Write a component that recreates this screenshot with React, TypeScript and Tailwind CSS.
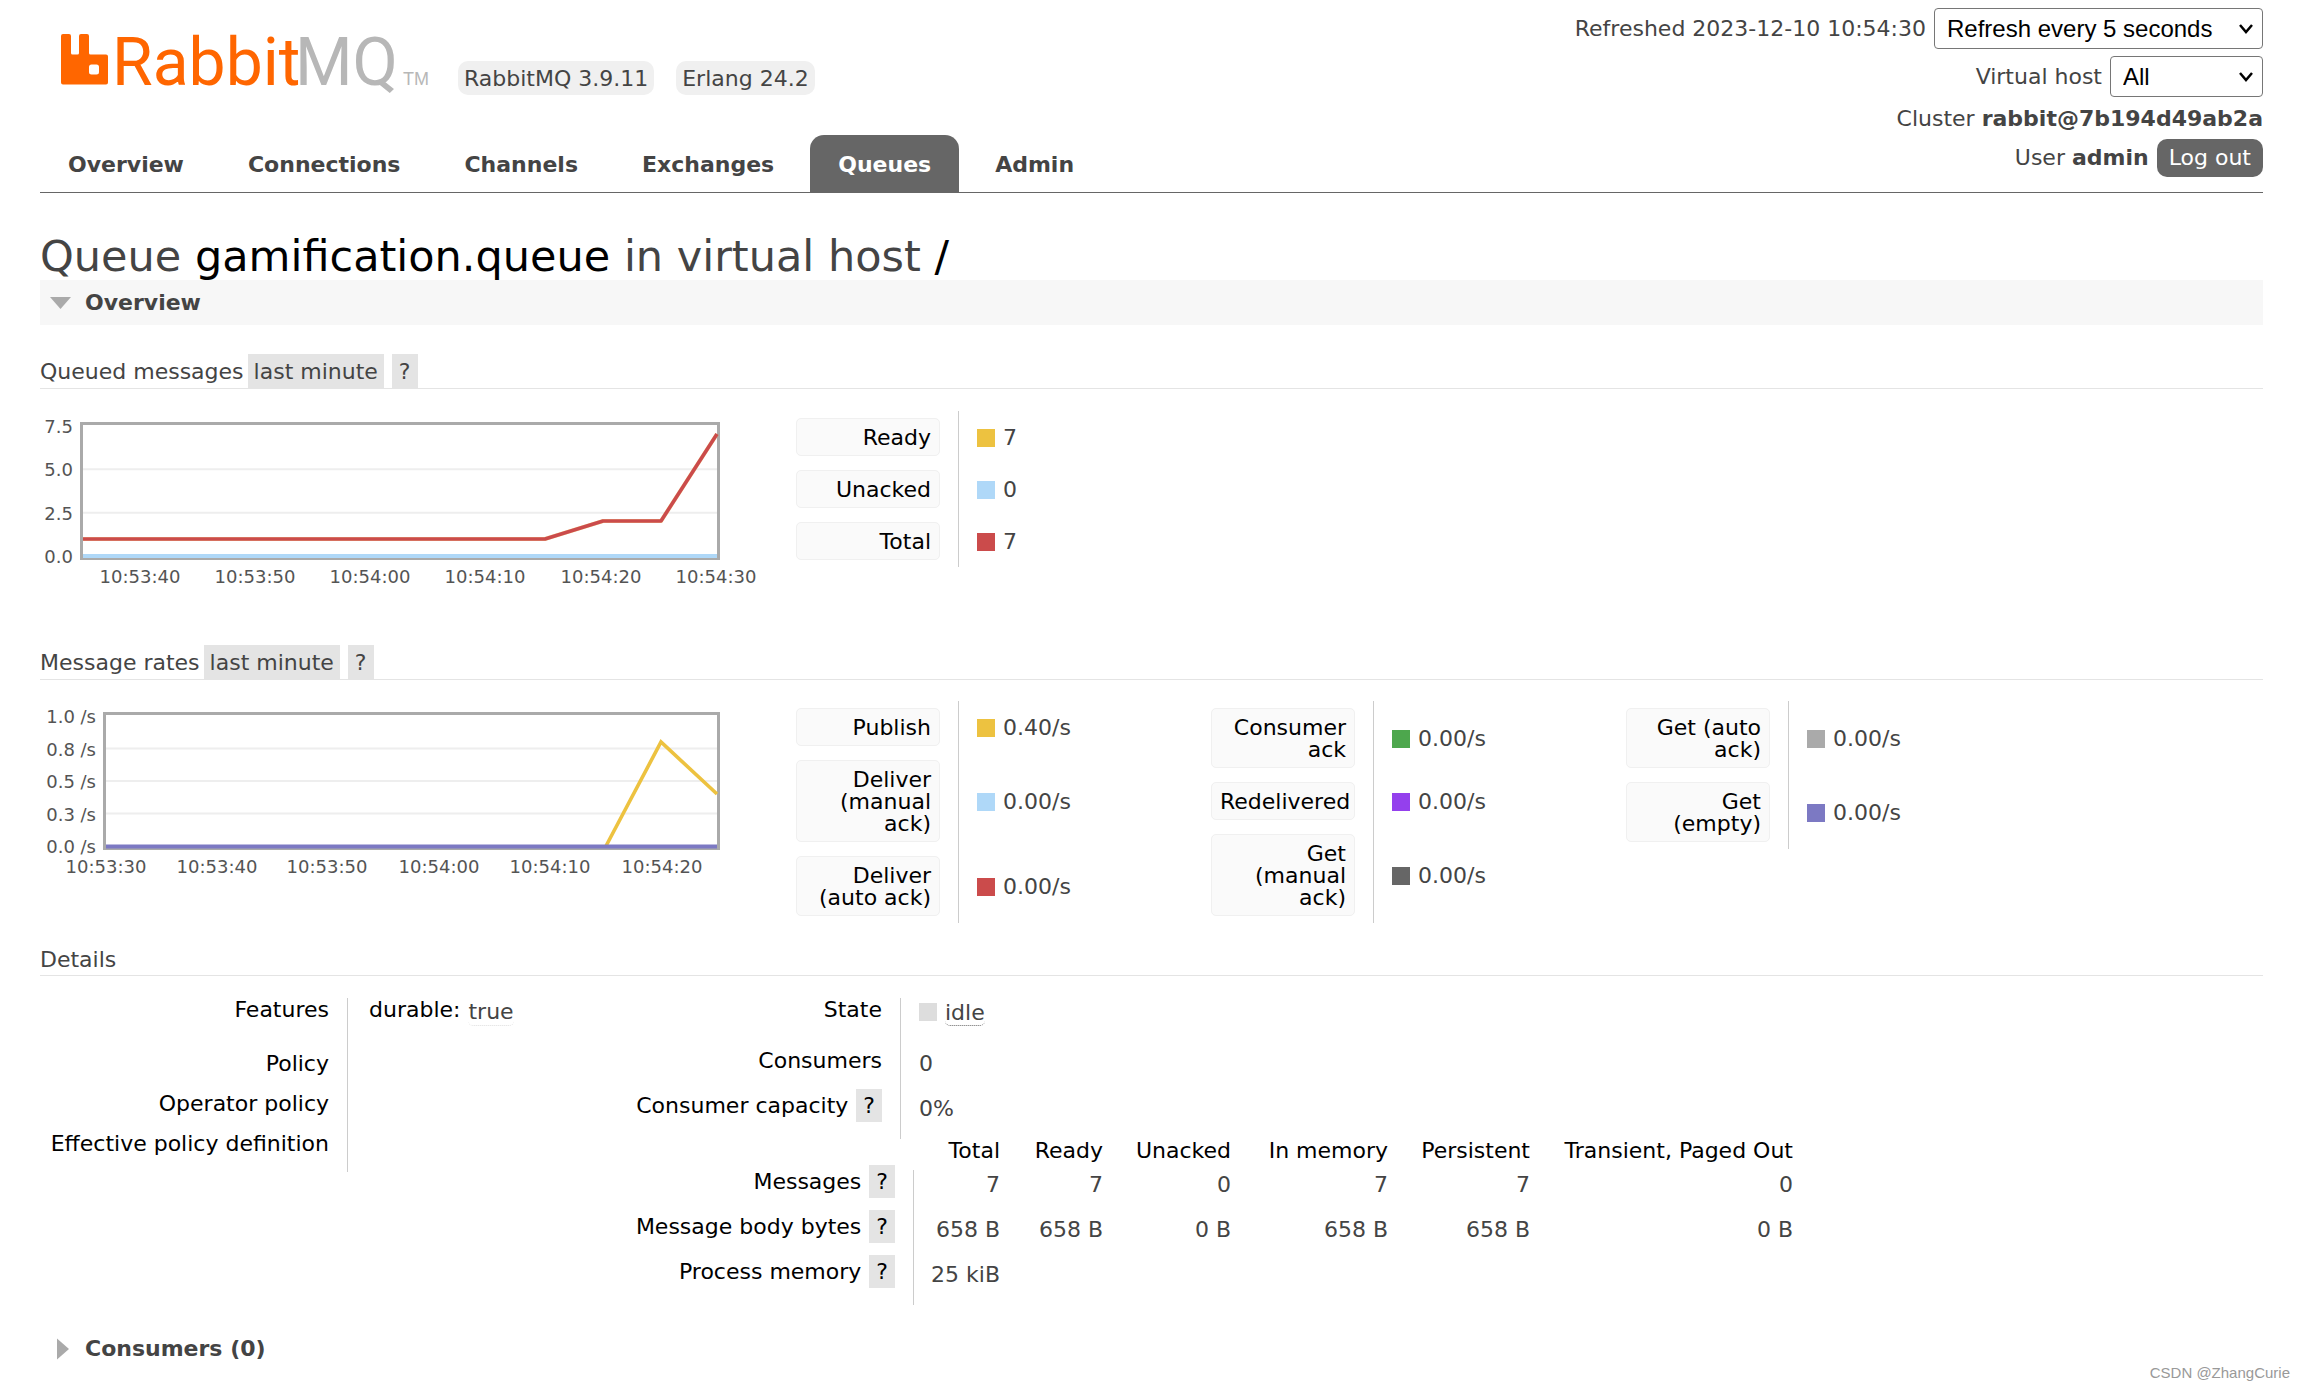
import type { ReactNode } from 'react';

const tabs = ['Overview', 'Connections', 'Channels', 'Exchanges', 'Queues', 'Admin'];

type Entry = { label: string; value: string; color: string };

const queued: Entry[] = [
  { label: 'Ready', value: '7', color: '#edc240' },
  { label: 'Unacked', value: '0', color: '#afd8f8' },
  { label: 'Total', value: '7', color: '#cb4b4b' },
];

const rates: Entry[][] = [
  [
    { label: 'Publish', value: '0.40/s', color: '#edc240' },
    { label: 'Deliver (manual ack)', value: '0.00/s', color: '#afd8f8' },
    { label: 'Deliver (auto ack)', value: '0.00/s', color: '#cb4b4b' },
  ],
  [
    { label: 'Consumer ack', value: '0.00/s', color: '#4da74d' },
    { label: 'Redelivered', value: '0.00/s', color: '#9440ed' },
    { label: 'Get (manual ack)', value: '0.00/s', color: '#666666' },
  ],
  [
    { label: 'Get (auto ack)', value: '0.00/s', color: '#aaaaaa' },
    { label: 'Get (empty)', value: '0.00/s', color: '#7c79c3' },
  ],
];

function Logo() {
  return (
    <svg width="370" height="86" viewBox="0 -20 370 86" className="overflow-visible" role="img" aria-label="RabbitMQ">
      <path
        fill="#ff6600"
        fillRule="evenodd"
        d="M2 0H8Q10 0 10 2V19Q10 20.500 11.500 20.500H16.500Q18 20.500 18 19V2Q18 0 20 0H26Q28 0 28 2V19Q28 20.500 29.500 20.500H45Q47 20.500 47 22.500V48.500Q47 50.500 45 50.500H2Q0 50.500 0 48.500V2Q0 0 2 0ZM30.500 30.500Q28 30.500 28 33V38Q28 40.500 30.500 40.500H35.500Q38 40.500 38 38V33Q38 30.500 35.500 30.500Z"
      />
      <text x="51" y="51" fontSize="66" fill="#ff6600" className="font-['Roboto',sans-serif]">
        Rabbit
      </text>
      <text x="234" y="51" fontSize="66" fill="#b7b7b7" className="font-['Roboto',sans-serif]">
        MQ
      </text>
      <text x="342" y="51" fontSize="18" fill="#b7b7b7" className="font-['Liberation_Sans',sans-serif]">
        TM
      </text>
    </svg>
  );
}

function Select({ id, width, children }: { id: string; width: string; children: ReactNode }) {
  return (
    <span className={`relative ${width}`}>
      <select
        id={id}
        className="h-[41px] w-full appearance-none rounded-[4px] border border-[#767676] bg-white pl-3 pr-10 font-['Liberation_Sans',sans-serif] text-[24px] leading-8 text-black"
      >
        {children}
      </select>
      <svg className="pointer-events-none absolute right-2.5 top-[15px]" width="14" height="13" viewBox="0 0 14 13" fill="none" stroke="#000" strokeWidth="2.500">
        <path d="M1 2L7 9L13 2" />
      </svg>
    </span>
  );
}

function Help() {
  return <button className="ml-2 bg-[#e4e4e4] px-[7px] pb-[3px] pt-[5px] leading-[26px]">?</button>;
}

/* Help marker that overflows its line the way padded inline text does. */
function InlineHelp() {
  return (
    <a href="#help" className="ml-2 bg-[#e4e4e4] px-[7px] py-1">
      ?
    </a>
  );
}

function Heading({ title }: { title: string }) {
  return (
    <h3 className="flex h-[35px] items-center border-b border-[#e4e4e4]">
      <span className="pt-px">{title}</span>
      <button className="ml-1 bg-[#e4e4e4] px-1.5 pb-[3px] pt-[5px] leading-[26px]">last minute</button>
      <Help />
    </h3>
  );
}

function Legend({ rows }: { rows: Entry[] }) {
  return (
    <div className="w-[415px]">
      <table className="border-separate border-spacing-0">
        <tbody>
          {rows.map((r) => (
            <tr key={r.label}>
              <th className="border-r border-[#ccc] py-[7px] pr-[18px] text-right font-normal leading-[22px] text-black">
                <div className="w-36 rounded-[5px] border border-[#f0f0f0] bg-[#fafafa] px-2 pb-1.5 pt-2">{r.label}</div>
              </th>
              <td className="pl-[18px] pt-0.5 leading-[22px]">
                <span className="flex items-center gap-2">
                  <span className="size-[18px]" style={{ backgroundColor: r.color }} />
                  {r.value}
                </span>
              </td>
            </tr>
          ))}
        </tbody>
      </table>
    </div>
  );
}

type ChartProps = {
  left: number;
  yLabels: string[];
  xLabels: { text: string; x: number }[];
  children: ReactNode;
};

function Chart({ left, yLabels, xLabels, children }: ChartProps) {
  const step = 130 / (yLabels.length - 1);
  return (
    <svg width="756" height="190" viewBox="0 0 756 190" className="shrink-0 font-['DejaVu_Sans',sans-serif] text-[18px]" fill="#545454">
      {yLabels.map((t, i) => (
        <g key={t}>
          {i > 0 && i < yLabels.length - 1 && (
            <path d={`M${left} ${15 + i * step}H677`} stroke="#eee" strokeWidth="2" />
          )}
          <text x={left - 7} y={22 + i * step} textAnchor="end">
            {t}
          </text>
        </g>
      ))}
      {xLabels.map((l) => (
        <text key={l.text} x={l.x} y="172" textAnchor="middle">
          {l.text}
        </text>
      ))}
      <rect x={left + 1.5} y="12.500" width={677 - left} height="135" fill="none" stroke="#aaa" strokeWidth="3" />
      {children}
    </svg>
  );
}

function Row({ label, help, first, children }: { label: string; help?: boolean; first?: boolean; children?: ReactNode }) {
  return (
    <tr className={first ? 'h-[51px]' : 'h-[45px]'}>
      <th className="w-[271px] whitespace-nowrap border-r border-[#ccc] pr-[18px] pt-px text-right align-top font-normal text-black">
        {label}
        {help && <InlineHelp />}
      </th>
      <td className="pl-[18px] pt-1 align-top">{children}</td>
    </tr>
  );
}

const stats = [
  { label: 'Messages', cells: ['7', '7', '0', '7', '7', '0'] },
  { label: 'Message body bytes', cells: ['658 B', '658 B', '0 B', '658 B', '658 B', '0 B'] },
  { label: 'Process memory', cells: ['25 kiB', '', '', '', '', ''] },
];

const columns = [
  { name: 'Total', width: 'w-[86px]' },
  { name: 'Ready', width: 'w-[103px]' },
  { name: 'Unacked', width: 'w-[128px]' },
  { name: 'In memory', width: 'w-[157px]' },
  { name: 'Persistent', width: 'w-[142px]' },
  { name: 'Transient, Paged Out', width: 'w-[263px]' },
];

export default function App() {
  return (
    <div className="relative min-h-screen bg-white pl-10 pr-[41px] font-['DejaVu_Sans',sans-serif] text-[22px] leading-[26px] text-[#444]">
      <header className="flex justify-between border-b border-[#666]">
        <div className="flex flex-col justify-between">
          <div className="flex items-end pl-[21px] pt-3.5">
            <a href="#home" className="-mb-[5px]">
              <Logo />
            </a>
            <span className="ml-[27px] rounded-[10px] bg-[#f0f0f0] px-1.5 pb-[3px] pt-[5px]">RabbitMQ 3.9.11</span>
            <span className="ml-[22px] rounded-[10px] bg-[#f0f0f0] px-1.5 pb-[3px] pt-[5px]">Erlang 24.2</span>
          </div>
          <nav className="flex gap-2 font-bold">
            {tabs.map((t) => (
              <a
                key={t}
                href={`#${t.toLowerCase()}`}
                className={
                  t === 'Queues'
                    ? 'rounded-t-[14px] bg-[#666] px-7 pb-3.5 pt-[17px] text-white'
                    : 'px-7 pb-3.5 pt-[17px]'
                }
              >
                {t}
              </a>
            ))}
          </nav>
        </div>
        <div className="flex flex-col items-end pb-[15px] pt-2">
          <div className="flex items-center gap-2">
            <label htmlFor="refresh">Refreshed 2023-12-10 10:54:30</label>
            <Select id="refresh" width="w-[329px]">
              <option>Refresh every 5 seconds</option>
            </Select>
          </div>
          <div className="mt-[7px] flex items-center gap-2">
            <label htmlFor="vhost">Virtual host</label>
            <Select id="vhost" width="w-[153px]">
              <option>All</option>
            </Select>
          </div>
          <div className="pb-[7px] pt-[9px]">
            Cluster <b>rabbit@7b194d49ab2a</b>
          </div>
          <div className="flex items-center gap-2">
            <span>
              User <b>admin</b>
            </span>
            <button className="rounded-[10px] bg-[#666] px-3 py-1.5 text-white">Log out</button>
          </div>
        </div>
      </header>

      <main>
        <h1 className="mt-[39px] text-[43px] leading-[48px]">
          Queue <b className="font-normal text-black">gamification.queue</b> in virtual host{' '}
          <b className="font-normal text-black">/</b>
        </h1>

        <h2 className="flex h-[45px] items-center bg-[#f7f7f7] pl-2.5 pt-px font-bold">
          <svg width="35" height="14" viewBox="0 0 35 14">
            <path d="M0 1H21L10.500 13Z" fill="#aaa" />
          </svg>
          Overview
        </h2>

        <section className="mt-[29px]">
          <Heading title="Queued messages" />
          <div className="mt-[22px] flex">
            <Chart
              left={40}
              yLabels={['7.5', '5.0', '2.5', '0.0']}
              xLabels={[
                { text: '10:53:40', x: 100 },
                { text: '10:53:50', x: 215 },
                { text: '10:54:00', x: 330 },
                { text: '10:54:10', x: 445 },
                { text: '10:54:20', x: 561 },
                { text: '10:54:30', x: 676 },
              ]}
            >
              <path d="M43 145H677" stroke="#afd8f8" strokeWidth="4" />
              <path d="M43 128H505L563 110H621L677 23" stroke="#edc240" strokeWidth="4" strokeOpacity="0.500" fill="none" />
              <path d="M43 128H505L563 110H621L677 23" stroke="#cb4b4b" strokeWidth="3.600" strokeLinejoin="round" fill="none" />
            </Chart>
            <Legend rows={queued} />
          </div>
        </section>

        <section className="mt-11">
          <Heading title="Message rates" />
          <div className="mt-[21px] flex">
            <Chart
              left={63}
              yLabels={['1.0 /s', '0.8 /s', '0.5 /s', '0.3 /s', '0.0 /s']}
              xLabels={[
                { text: '10:53:30', x: 66 },
                { text: '10:53:40', x: 177 },
                { text: '10:53:50', x: 287 },
                { text: '10:54:00', x: 399 },
                { text: '10:54:10', x: 510 },
                { text: '10:54:20', x: 622 },
              ]}
            >
              <path d="M566 145L621 41L677 93" stroke="#edc240" strokeWidth="3.600" fill="none" />
              <path d="M66 145.500H677" stroke="#7c79c3" strokeWidth="4" />
            </Chart>
            {rates.map((rows) => (
              <Legend key={rows[0].label} rows={rows} />
            ))}
          </div>
        </section>

        <section className="mt-5">
          <h3 className="flex h-[33px] items-center border-b border-[#e4e4e4] pt-px">Details</h3>
          <div className="mt-[22px] flex leading-[22px]">
            <div className="w-[590px]">
              <table className="border-separate border-spacing-0">
                <tbody>
                  <tr className="h-[54px]">
                    <th className="w-[308px] border-r border-[#ccc] pr-[18px] pt-px text-right align-top font-normal text-black">Features</th>
                    <td className="pl-[21px] pt-px align-top">
                      <span className="flex items-start gap-2">
                        <span className="text-black">durable:</span>
                        <abbr className="mt-0.5 rounded-[5px] border-b border-dotted border-[#ddd] pb-0.5 no-underline">true</abbr>
                      </span>
                    </td>
                  </tr>
                  {['Policy', 'Operator policy', 'Effective policy definition'].map((l) => (
                    <tr key={l} className="h-10">
                      <th className="border-r border-[#ccc] pr-[18px] pt-px text-right align-top font-normal text-black">{l}</th>
                      <td />
                    </tr>
                  ))}
                </tbody>
              </table>
            </div>
            <div>
              <table className="border-separate border-spacing-0">
                <tbody>
                  <Row label="State" first>
                    <span className="flex items-start gap-2">
                      <span className="mt-px size-[18px] bg-[#ddd]" />
                      <abbr className="rounded-[5px] border-b border-dotted border-[#666] pb-px no-underline">idle</abbr>
                    </span>
                  </Row>
                  <Row label="Consumers">0</Row>
                  <Row label="Consumer capacity" help>
                    0%
                  </Row>
                </tbody>
              </table>
              <table className="table-fixed border-separate border-spacing-0 text-right">
                <thead>
                  <tr className="h-[31px]">
                    <td className="w-[284px]" />
                    {columns.map((c) => (
                      <th key={c.name} className={`whitespace-nowrap pt-px align-top font-normal text-black ${c.width}`}>
                        {c.name}
                      </th>
                    ))}
                  </tr>
                </thead>
                <tbody>
                  {stats.map((s) => (
                    <tr key={s.label} className="h-[45px]">
                      <th className="whitespace-nowrap border-r border-[#ccc] pr-[18px] pt-px text-right align-top font-normal text-black">
                        {s.label}
                        <InlineHelp />
                      </th>
                      {s.cells.map((c, i) => (
                        <td key={i} className="whitespace-nowrap pt-1 align-top">
                          {c}
                        </td>
                      ))}
                    </tr>
                  ))}
                </tbody>
              </table>
            </div>
          </div>
        </section>

        <h2 className="mt-[21px] flex h-[45px] items-center pl-[17px] pt-px font-bold">
          <svg width="28" height="22" viewBox="0 0 28 22">
            <path d="M0 0.500V21.500L12 11Z" fill="#aaa" />
          </svg>
          Consumers (0)
        </h2>
      </main>

      <div className="absolute bottom-2 right-3.5 font-['Liberation_Sans',sans-serif] text-[15px] leading-5 text-[#999]">CSDN @ZhangCurie</div>
    </div>
  );
}
